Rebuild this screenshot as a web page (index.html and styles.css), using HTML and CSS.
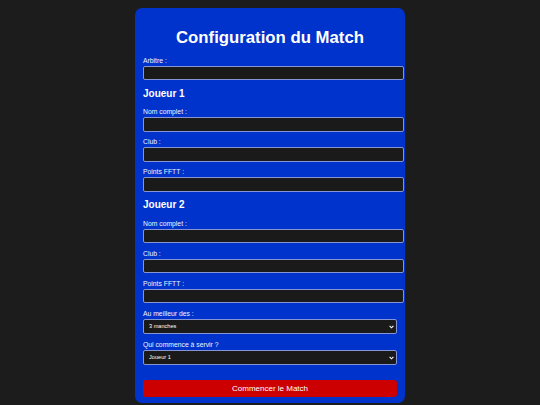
FILE: index.html
```html
<!DOCTYPE html>
<html lang="fr">
<head>
<meta charset="utf-8">
<title>Configuration du Match</title>
<link rel="stylesheet" href="styles.css">
</head>
<body>
<form class="card">
  <h1 class="title">Configuration du Match</h1>
  <div class="group">
    <label class="label">Arbitre :</label>
    <input class="field" type="text">
  </div>
  <h2 class="player">Joueur 1</h2>
  <div class="group">
    <label class="label">Nom complet :</label>
    <input class="field" type="text">
  </div>
  <div class="group">
    <label class="label">Club :</label>
    <input class="field" type="text">
  </div>
  <div class="group">
    <label class="label">Points FFTT :</label>
    <input class="field" type="text">
  </div>
  <h2 class="player">Joueur 2</h2>
  <div class="group">
    <label class="label">Nom complet :</label>
    <input class="field" type="text">
  </div>
  <div class="group">
    <label class="label">Club :</label>
    <input class="field" type="text">
  </div>
  <div class="group">
    <label class="label">Points FFTT :</label>
    <input class="field" type="text">
  </div>
  <div class="group">
    <label class="label">Au meilleur des :</label>
    <div class="select-wrap">
      <select class="choice"><option>3 manches</option><option>5 manches</option></select>
      <svg class="chev" width="5" height="4" viewBox="0 0 5 4"><path d="M0.6 0.9 L2.5 2.8 L4.4 0.9" fill="none" stroke="#ffffff" stroke-width="1.1"/></svg>
    </div>
  </div>
  <div class="group">
    <label class="label">Qui commence à servir ?</label>
    <div class="select-wrap">
      <select class="choice"><option>Joueur 1</option><option>Joueur 2</option></select>
      <svg class="chev" width="5" height="4" viewBox="0 0 5 4"><path d="M0.6 0.9 L2.5 2.8 L4.4 0.9" fill="none" stroke="#ffffff" stroke-width="1.1"/></svg>
    </div>
  </div>
  <button class="start" type="button">Commencer le Match</button>
</form>
</body>
</html>
```
FILE: styles.css
```css
html, body {
  margin: 0;
  padding: 0;
  background: #1c1c1c;
  font-family: "Liberation Sans", Arial, sans-serif;
  color: #ffffff;
}
body {
  height: 405px;
  overflow: hidden;
}
.card {
  width: 254px;
  margin: 8px auto 0;
  padding: 8px 8px 6px;
  background: #0033cc;
  border-radius: 7px;
  display: block;
}
.title {
  margin: 12px 0 7.5px;
  font-size: 16.75px;
  line-height: 20px;
  font-weight: bold;
  text-align: center;
}
.group {
  margin-bottom: 5.5px;
}
.label {
  display: block;
  font-size: 6.8px;
  line-height: 9px;
  margin-bottom: 1px;
  color: #f2f4ff;
}
.field {
  display: block;
  box-sizing: border-box;
  width: calc(100% + 7px);
  height: 14.5px;
  margin: 0;
  padding: 0 3px;
  background: #1a1a1a;
  border: 1px solid #8595d6;
  border-radius: 2px;
  color: #fff;
  font: 6px "Liberation Sans", Arial, sans-serif;
  outline: none;
}
.player {
  margin: 7.5px 0 7.5px;
  font-size: 10px;
  line-height: 12px;
  font-weight: bold;
}
.select-wrap {
  position: relative;
}
.choice {
  display: block;
  box-sizing: border-box;
  width: 100%;
  height: 15.5px;
  margin: 0;
  padding: 0 5px;
  background: #1a1a1a;
  border: 1px solid #8595d6;
  border-radius: 2px;
  color: #fff;
  font: 5.6px "Liberation Sans", Arial, sans-serif;
  -webkit-appearance: none;
  appearance: none;
}
.chev {
  position: absolute;
  right: 3px;
  top: 6px;
  pointer-events: none;
}
.start {
  display: block;
  box-sizing: border-box;
  width: 100%;
  height: 17px;
  margin: 15px 0 0;
  padding: 0;
  border: none;
  border-radius: 3px;
  background: #cc0000;
  color: #fff;
  font: 8px "Liberation Sans", Arial, sans-serif;
}
```
